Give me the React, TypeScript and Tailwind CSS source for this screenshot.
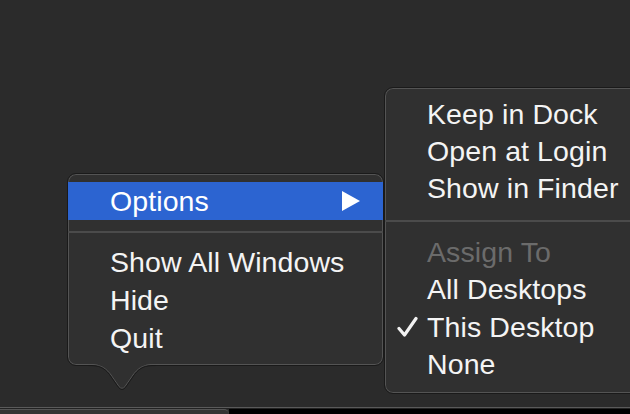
// Dock context menu with the Options submenu opened.
const font = { fontFamily: '"Liberation Sans", Arial, sans-serif' };

function Check() {
  return (
    <svg width="22" height="22" viewBox="0 0 22 22" fill="none" className="absolute left-[12px] top-1/2 -translate-y-1/2">
      <path d="M2 12.5l5.5 6.5L19 2.5" stroke="#f2f2f2" strokeWidth="3.2" strokeLinecap="round" strokeLinejoin="round" />
    </svg>
  );
}

function Item({ label, h = "h-[38px]", muted = false, checked = false }: { label: string; h?: string; muted?: boolean; checked?: boolean }) {
  return (
    <div className={`relative flex items-center pl-[42px] ${h} text-[28.5px] tracking-[0.1px] leading-none ${muted ? "text-[#6b6b6b]" : "text-[#f4f4f4]"}`}>
      {checked && <Check />}
      {label}
    </div>
  );
}

function Sep({ h }: { h: string }) {
  return (
    <div className={`flex items-center ${h}`}>
      <div className="h-[2px] w-full bg-[#4b4b4b]" />
    </div>
  );
}

export default function App() {
  return (
    <div className="w-[630px] h-[414px] flex flex-col bg-[#2b2b2b] overflow-hidden" style={font}>
      <div className="relative flex-1">
        {/* main menu */}
        <div className="absolute left-[67px] top-[173px] w-[317px] h-[193px] rounded-[9px] border border-[#1a1a1a] bg-[#303030] shadow-[inset_0_0_0_1px_#545454] py-[8px]">
          <div className="flex items-center justify-between h-[38px] bg-[#2c64d1] pl-[42px] pr-[23px] text-[28.5px] tracking-[0.1px] leading-none text-white">
            <span>Options</span>
            <svg width="18" height="20" viewBox="0 0 18 20">
              <path d="M0 0L18 10L0 20Z" fill="#fff" />
            </svg>
          </div>
          <Sep h="h-[23px]" />
          <Item label="Show All Windows" />
          <Item label="Hide" />
          <Item label="Quit" />
        </div>
        {/* pointer under the main menu */}
        <svg width="68" height="30" viewBox="0 0 68 30" className="absolute left-[88px] top-[362px]">
          <path d="M0 0L0 2C12 2 16 4 22 11L31 24Q34 27.5 37 24L46 11C52 4 56 2 68 2L68 0Z" fill="#303030" />
          <path d="M0 2.5C12 2.5 16 4.5 22 11.5L31 24.5Q34 28 37 24.5L46 11.5C52 4.5 56 2.5 68 2.5" stroke="#545454" strokeWidth="1" fill="none" />
          <path d="M0 3.5C12 3.5 15.5 5.5 21.5 12.5L30.5 25.5Q34 29.5 37.5 25.5L46.5 12.5C52.5 5.5 56 3.5 68 3.5" stroke="#1a1a1a" strokeWidth="1" fill="none" />
        </svg>
        {/* submenu */}
        <div className="absolute left-[384px] top-[87px] w-[270px] h-[307px] rounded-[9px] border border-[#1a1a1a] bg-[#303030] shadow-[inset_0_0_0_1px_#545454] py-[8px]">
          <Item label="Keep in Dock" h="h-[37px]" />
          <Item label="Open at Login" h="h-[37px]" />
          <Item label="Show in Finder" h="h-[37px]" />
          <Sep h="h-[27px]" />
          <Item label="Assign To" h="h-[37px]" muted />
          <Item label="All Desktops" h="h-[37px]" />
          <Item label="This Desktop" h="h-[38px]" checked />
          <Item label="None" h="h-[37px]" />
        </div>
      </div>
      <div className="h-px bg-[#5a5a5a]" />
      <div className="h-px bg-[#222]" />
      <div className="flex h-[5px]">
        <div className="w-[229px] rounded-tr-[6px] border-t border-[#555] bg-[#343434]" />
        <div className="flex-1 bg-black" />
      </div>
    </div>
  );
}
